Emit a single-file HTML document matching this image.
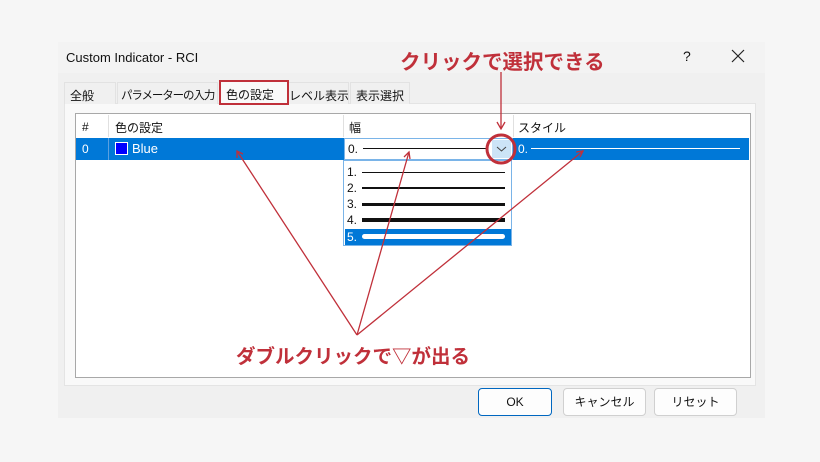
<!DOCTYPE html>
<html><head><meta charset="utf-8"><style>
*{margin:0;padding:0;box-sizing:border-box}
body{width:820px;height:462px;background:#f6f6f6;position:relative;overflow:hidden;font-family:"Liberation Sans","Noto Sans CJK JP",sans-serif;font-size:12px;color:#111}
.a{position:absolute}
.tab{position:absolute;top:82px;height:22px;background:#f0f0f0;border:1px solid #e2e2e2;border-bottom:none;padding:4px 5px 0;font-size:12px;white-space:nowrap;overflow:hidden}
.btn{position:absolute;top:388px;height:28px;background:#fdfdfd;border:1px solid #d0d0d0;border-radius:4px;text-align:center;line-height:26px;font-size:12px}
.it{position:absolute;left:1px;width:166px;height:16px;font-size:12px;line-height:16px;padding-left:2px}
.ln{position:absolute;left:17px;right:6px;background:#111}
</style></head><body>
<div class="a" style="left:58px;top:42px;width:707px;height:376px;background:#f0f0f0"></div>
<div class="a" style="left:58px;top:42px;width:707px;height:31px;background:#f3f3f3"></div>
<div class="a" style="left:66px;top:50px;font-size:13px">Custom Indicator - RCI</div>
<div class="a" style="left:683px;top:48px;font-size:14px">?</div>
<svg class="a" style="left:731px;top:49px" width="14" height="14"><path d="M1 1L13 13M13 1L1 13" stroke="#222" stroke-width="1.2"/></svg>
<div class="a" style="left:64px;top:103px;width:692px;height:283px;background:#f9f9f9;border:1px solid #e4e4e4"></div>
<div class="tab" style="left:64px;width:52px">全般</div>
<div class="tab" style="left:117px;width:101px;padding-left:3px;letter-spacing:-1.1px;font-size:11.5px">パラメーターの入力</div>
<div class="tab" style="left:219px;top:80px;height:25px;width:70px;background:#f9f9f9;border:2px solid #c0303a">色の設定</div>
<div class="tab" style="left:289px;width:60px;border-left:none;padding-left:0">レベル表示</div>
<div class="tab" style="left:350px;width:60px">表示選択</div>
<div class="a" style="left:75px;top:113px;width:676px;height:265px;background:#fff;border:1px solid #a8a8a8"></div>
<div class="a" style="left:82px;top:120px">#</div>
<div class="a" style="left:115px;top:119px">色の設定</div>
<div class="a" style="left:349px;top:119px">幅</div>
<div class="a" style="left:518px;top:119px">スタイル</div>
<div class="a" style="left:108px;top:115px;width:1px;height:22px;background:#e0e0e0"></div>
<div class="a" style="left:343px;top:115px;width:1px;height:22px;background:#e0e0e0"></div>
<div class="a" style="left:513px;top:115px;width:1px;height:22px;background:#e0e0e0"></div>
<div class="a" style="left:76px;top:138px;width:673px;height:22px;background:#0078d7"></div>
<div class="a" style="left:108px;top:138px;width:1px;height:22px;background:#5aa0e0"></div>
<div class="a" style="left:82px;top:142px;color:#fff">0</div>
<div class="a" style="left:115px;top:142px;width:13px;height:13px;background:#0000ff;border:1px solid #fff"></div>
<div class="a" style="left:132px;top:141px;color:#fff;font-size:13px">Blue</div>
<div class="a" style="left:518px;top:142px;color:#fff">0.</div>
<div class="a" style="left:531px;top:148px;width:209px;height:1px;background:#fff"></div>
<div class="a" style="left:344px;top:138px;width:169px;height:22px;background:#fff;border:1px solid #7ab4e8"></div>
<div class="a" style="left:348px;top:142px">0.</div>
<div class="a" style="left:363px;top:148px;width:123px;height:1px;background:#111"></div>
<div class="a" style="left:492px;top:140px;width:19px;height:18px;background:#cce4f7"></div>
<svg class="a" style="left:496px;top:146px" width="11" height="6"><path d="M1 1L5.5 5L10 1" stroke="#444" fill="none" stroke-width="1"/></svg>
<div class="a" style="left:343px;top:160px;width:169px;height:86px;background:#fff;border:1px solid #7ab4e8">
<div class="it" style="top:3px">1.<div class="ln" style="top:8px;height:1px"></div></div>
<div class="it" style="top:19px">2.<div class="ln" style="top:7px;height:2px"></div></div>
<div class="it" style="top:35px">3.<div class="ln" style="top:7px;height:3px"></div></div>
<div class="it" style="top:51px">4.<div class="ln" style="top:6px;height:4px"></div></div>
<div class="it" style="top:68px;background:#0078d7;color:#fff">5.<div class="ln" style="top:5px;height:5px;background:#fff;border-radius:3px"></div></div>
</div>
<div class="btn" style="left:478px;width:74px;border:1px solid #0067c0">OK</div>
<div class="btn" style="left:563px;width:83px">キャンセル</div>
<div class="btn" style="left:654px;width:83px">リセット</div>
<div class="a" style="left:400px;top:45px;font-size:20.5px;font-weight:bold;color:#c0303a;font-family:'Noto Sans CJK JP',sans-serif;white-space:nowrap">クリックで選択できる</div>
<div class="a" style="left:236px;top:340px;font-size:19.5px;font-weight:bold;color:#c0303a;font-family:'Noto Sans CJK JP',sans-serif;white-space:nowrap">ダブルクリックで▽が出る</div>
<svg class="a" style="left:0;top:0" width="820" height="462">
<g stroke="#c0303a" fill="none" stroke-width="1.3">
<line x1="501" y1="72" x2="501" y2="128"/>
<polyline points="497,122 501,129 505,122"/>
<circle cx="501" cy="149" r="14" stroke-width="3"/>
<line x1="357" y1="335" x2="237" y2="151"/>
<polyline points="237,158 237,151 243,154"/>
<line x1="357" y1="335" x2="409" y2="152"/>
<polyline points="404,157 409,152 410,159"/>
<line x1="357" y1="335" x2="583" y2="151"/>
<polyline points="576,152 583,151 580,157"/>
</g></svg>
</body></html>
